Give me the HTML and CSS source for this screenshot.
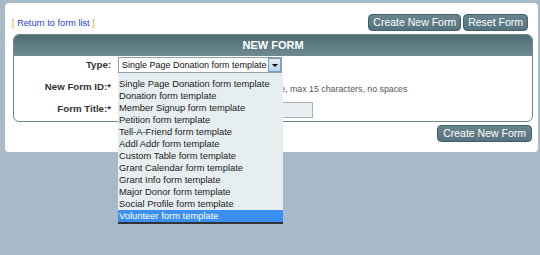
FILE: index.html
```html
<html>

<head>
    <title>New Form</title>
    <link rel="stylesheet" href="styles.css">
</head>

<body>
    <div class="card">
        <div class="topbar">
            <div class="return"><span class="bracket">[</span> <a href="#">Return to form list</a> <span class="bracket">]</span></div>
            <div class="actions">
                <button class="btn">Create New Form</button>
                <button class="btn">Reset Form</button>
            </div>
        </div>

        <div class="panel">
            <div class="panel-head">NEW FORM</div>
            <div class="form-grid">
                <label class="lbl">Type:</label>
                <div class="ctrl">
                    <div class="select">
                        <span class="select-text">Single Page Donation form template</span>
                        <span class="select-arrow"></span>
                        <ul class="dropdown">
                            <li>Single Page Donation form template</li>
                            <li>Donation form template</li>
                            <li>Member Signup form template</li>
                            <li>Petition form template</li>
                            <li>Tell-A-Friend form template</li>
                            <li>Addl Addr form template</li>
                            <li>Custom Table form template</li>
                            <li>Grant Calendar form template</li>
                            <li>Grant Info form template</li>
                            <li>Major Donor form template</li>
                            <li>Social Profile form template</li>
                            <li class="active">Volunteer form template</li>
                        </ul>
                    </div>
                </div>

                <label class="lbl">New Form ID:*</label>
                <div class="ctrl">
                    <input class="field field-id" type="text">
                    <span class="hint">Must be unique, max 15 characters, no spaces</span>
                </div>

                <label class="lbl">Form Title:*</label>
                <div class="ctrl">
                    <input class="field field-title" type="text">
                </div>
            </div>
        </div>

        <div class="bottombar">
            <button class="btn">Create New Form</button>
        </div>
    </div>
</body>

</html>
```

FILE: styles.css
```css
body {
    margin: 0;
    background: #a6bac8;
    font-family: 'Liberation Sans', Arial, sans-serif;
    color: #333;
}

.card {
    margin: 3px 2px 0 5px;
    padding: 12px 5px 10px 8px;
    background: #fff;
    border-radius: 4px;
}

.topbar {
    display: flex;
    justify-content: space-between;
    align-items: center;
    height: 17px;
    margin-top: -1px;
}

.return {
    font-size: 9.2px;
    margin-left: -1px;
}

.return a {
    color: #1f3fcf;
    text-decoration: none;
}

.bracket {
    color: #e89a1e;
}

.actions {
    display: flex;
    gap: 2px;
    margin-right: 5px;
}

.btn {
    height: 17px;
    padding: 0 5px;
    background: linear-gradient(#68858e, #56747d);
    border: 1px solid #42606a;
    border-radius: 4px;
    color: #fff;
    font-family: 'Liberation Sans', Arial, sans-serif;
    font-size: 10.5px;
    line-height: 15px;
}

.actions .btn {
    padding: 0 4px;
}

.panel {
    margin-top: 3px;
    border: 1px solid #6b868d;
    border-radius: 6px;
}

.panel-head {
    height: 21px;
    line-height: 21px;
    background: linear-gradient(#4e6b73, #6f8b92);
    border-radius: 5px 5px 0 0;
    color: #fff;
    font-size: 11px;
    font-weight: bold;
    text-align: center;
}

.form-grid {
    display: grid;
    grid-template-columns: 97px 1fr;
    grid-auto-rows: 16px;
    column-gap: 7px;
    row-gap: 6px;
    padding: 1px 0 4px 0;
}

.lbl {
    text-align: right;
    font-size: 9.7px;
    font-weight: bold;
    line-height: 16px;
    color: #333;
}

.ctrl {
    display: flex;
    align-items: center;
}

.select {
    position: relative;
    width: 164px;
    height: 16px;
    box-sizing: border-box;
    border: 1px solid #8ea2ae;
    background: #fff;
    font-size: 9px;
    line-height: 14px;
}

.select-text {
    padding-left: 3px;
    color: #111;
}

.select-arrow {
    position: absolute;
    top: 0;
    right: 0;
    width: 13px;
    height: 14px;
    box-sizing: border-box;
    border: 1px solid #7a9cc0;
    background: linear-gradient(#e2eef8, #bcd4ea);
}

.select-arrow::after {
    content: '';
    position: absolute;
    left: 3px;
    top: 5px;
    border-left: 3px solid transparent;
    border-right: 3px solid transparent;
    border-top: 3px solid #000;
}

.dropdown {
    position: absolute;
    top: 15px;
    left: -1px;
    width: 165px;
    margin: 0;
    padding: 5px 0 0 0;
    list-style: none;
    background: #e7eef0;
    border-bottom: 2px solid #333;
    z-index: 10;
}

.dropdown li {
    height: 12px;
    line-height: 12px;
    padding-left: 1px;
    font-size: 9.4px;
    color: #222;
    white-space: nowrap;
}

.dropdown li.active {
    background: #3a8ff0;
    color: #fff;
}

.field {
    height: 16px;
    box-sizing: border-box;
    border: 1px solid #a9b1b4;
    background: #eaf0f1;
    padding: 0 2px;
}

.field-id {
    width: 96px;
    margin-right: 11px;
}

.field-title {
    width: 195px;
    margin-top: 1px;
}

.hint {
    font-size: 8.8px;
    color: #555;
    margin-top: 4px;
}

.bottombar {
    display: flex;
    justify-content: flex-end;
    margin-top: 3px;
    padding-right: 1px;
}
```
